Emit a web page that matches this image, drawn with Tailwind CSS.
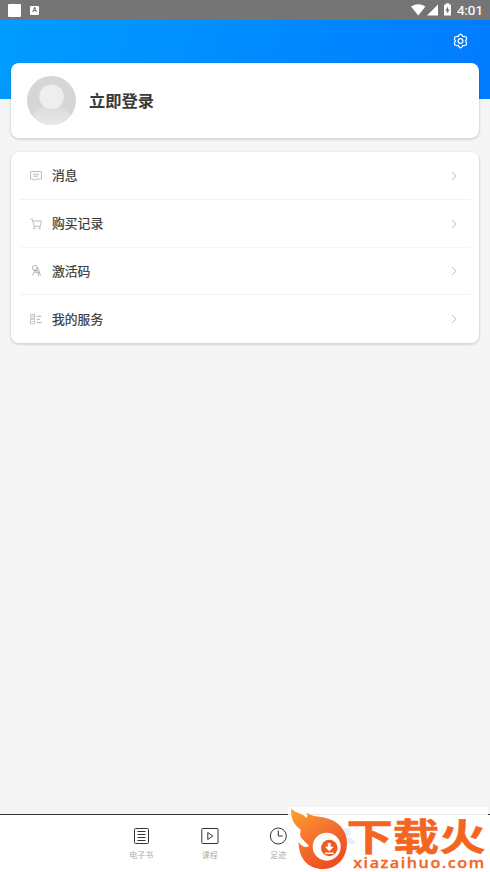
<!DOCTYPE html>
<html lang="zh-CN">
<head>
<meta charset="utf-8">
<title>我的</title>
<script src="https://cdn.jsdelivr.net/npm/@tailwindcss/browser@4"></script>
</head>
<body class="w-[490px] h-[872px] overflow-hidden bg-[#f5f5f5] font-['Noto_Sans_CJK_SC',sans-serif] text-[#3a3a3a]">
<div class="relative flex flex-col w-[490px] h-[872px]">
  <div class="absolute inset-x-0 top-5 h-[79px] bg-linear-[105deg,#009cff,#007cff]"></div>

  <header class="relative h-5 shrink-0 bg-[#757575] flex items-center pl-2 pr-[7px]">
    <div class="w-[13px] h-[13px] bg-white rounded-[1px]"></div>
    <div class="ml-[9px] w-[9px] h-[9px] bg-white rounded-[1px] text-[#757575] text-[7px] leading-[9px] font-bold text-center font-['Roboto',sans-serif]">A</div>
    <svg class="ml-auto" width="43" height="14" viewBox="0 0 43 14" fill="#fff">
      <path d="M0 3.5Q7.3-1 14.4 3.5L7.3 12.5z"/><path d="M27 1.5v11H16z"/>
      <path fill-rule="evenodd" d="M33 1.6h2V.3h3v1.3h2v11h-7zM37 3.5l-2.8 4.2h1.7v3L38.8 6.6h-1.8z"/>
    </svg>
    <span class="ml-[3px] font-['Roboto',sans-serif] text-[13.5px] leading-5 text-white [-webkit-text-stroke:.2px_#fff]">4:01</span>
  </header>

  <div class="relative h-[43px] shrink-0 flex justify-end pt-[13px] pr-[22px]">
    <svg width="15" height="16" viewBox="0 0 15 16" fill="none" stroke="#fff" stroke-width="1.2" stroke-linejoin="round"><path d="M5.6 2.4 7.5 1 9.4 2.4 9.8 3.7 11.1 3.3 13.4 4.3 13.5 6.6 12.4 8 13.5 9.4 13.4 11.7 11.1 12.7 9.8 12.3 9.4 13.6 7.5 15 5.6 13.6 5.2 12.3 3.9 12.7 1.6 11.7 1.5 9.4 2.6 8 1.5 6.6 1.6 4.3 3.9 3.3 5.2 3.7z"/><circle cx="7.5" cy="8" r="2.4"/></svg>
  </div>

  <section class="relative mx-[11px] h-[75px] shrink-0 bg-white rounded-lg shadow-[0_1px_2px_1px_rgba(0,0,0,0.12)] flex items-center pl-4">
    <svg width="49" height="49" viewBox="0 0 49 49">
      <defs><clipPath id="avatar"><circle cx="24.5" cy="24.5" r="24.5"/></clipPath><linearGradient id="body" x2="0" y2=".7"><stop stop-color="#dadada"/><stop offset="1" stop-color="#ebebeb"/></linearGradient></defs>
      <g clip-path="url(#avatar)"><path fill="#d6d6d6" d="M0 0h49v49H0z"/><ellipse cx="24.5" cy="45.5" rx="20" ry="16.5" fill="url(#body)"/><circle cx="24.6" cy="20.8" r="12.3" fill="#eee"/></g>
    </svg>
    <h1 class="-mt-px ml-[13px] text-[16.3px] leading-6 font-bold">立即登录</h1>
  </section>

  <nav class="relative mt-[14px] mx-[11px] h-[191px] shrink-0 bg-white rounded-lg shadow-[0_1px_2px_1px_rgba(0,0,0,0.12)] pl-[9px] pr-[9px] text-[12.8px] leading-5 font-normal [-webkit-text-stroke:.2px_#3a3a3a]">
    <a class="h-12 flex items-center border-b border-[#f3f3f3] pl-[10px] pr-[13px]">
      <svg width="12" height="12" viewBox="0 0 12 12" fill="none" stroke="#b5b5b5" stroke-width=".9"><path d="M.6 1.5h10.8v7.6H5.8L4.4 10.6 3.2 9.1H.6zM3 4.2h6M3 6.2h5"/></svg>
      <span class="ml-[10px] -mt-px">消息</span>
      <svg class="ml-auto" width="6" height="10" viewBox="0 0 6 10" fill="none" stroke="#bcbcbc"><path d="M.8.8 5.2 5 .8 9.2"/></svg>
    </a>
    <a class="h-12 flex items-center border-b border-[#f6f6f6] pl-[10px] pr-[13px]">
      <svg width="12" height="12" viewBox="0 0 12 12" fill="none" stroke="#b5b5b5" stroke-width=".9"><path d="M.5 1.3h2L4.1 8.3h6.2L11.2 3H3"/><circle cx="4.4" cy="10.3" r=".8"/><circle cx="9.6" cy="10.3" r=".8"/></svg>
      <span class="ml-[10px] -mt-px">购买记录</span>
      <svg class="ml-auto" width="6" height="10" viewBox="0 0 6 10" fill="none" stroke="#bcbcbc"><path d="M.8.8 5.2 5 .8 9.2"/></svg>
    </a>
    <a class="h-[47px] flex items-center border-b border-[#f3f3f3] pl-[10px] pr-[13px]">
      <svg width="12" height="12" viewBox="0 0 12 12" fill="none" stroke="#a5a5a5" stroke-width=".8"><circle cx="5" cy="3" r="2.6"/><path d="M5 4.6 7 2.6 9 4.6M3.8 5.5 5 6.4 2 10.8M4.8 7.6 6.8 4.6 8.6 8v3M8.6 5 10.6 10.6M5.5 7.5h2.8"/></svg>
      <span class="ml-[10px]">激活码</span>
      <svg class="ml-auto" width="6" height="10" viewBox="0 0 6 10" fill="none" stroke="#bcbcbc"><path d="M.8.8 5.2 5 .8 9.2"/></svg>
    </a>
    <a class="h-12 flex items-center pl-[10px] pr-[13px]">
      <svg width="12" height="12" viewBox="0 0 12 12" fill="none" stroke="#b5b5b5" stroke-width=".8"><path d="M.6 1.3h4v4h-4zM.6 6.2h4v4.6h-4zM1.5 3l1 1L5 .8M1.6 8.6h2"/><path stroke-width="1" d="M6.5 3.3h5M6.5 6.3h3.5M6.5 9.6h5.3"/></svg>
      <span class="ml-[10px] -mt-px">我的服务</span>
      <svg class="ml-auto" width="6" height="10" viewBox="0 0 6 10" fill="none" stroke="#bcbcbc"><path d="M.8.8 5.2 5 .8 9.2"/></svg>
    </a>
  </nav>

  <footer class="mt-auto h-[58px] shrink-0 bg-white border-t border-[#333] flex pl-[107px] text-[8px] leading-3 text-[#aaa]">
    <div class="w-[68.5px] flex flex-col items-center pt-3">
      <svg width="18" height="18" viewBox="0 0 18 18" fill="none" stroke="#333"><rect x="2.5" y="1.5" width="14" height="15" rx="1"/><path d="M5.500 4.5h8M5.500 7.5h8M5.500 10.5h8M5.500 13.5h8"/></svg>
      <span class="mt-[4px]">电子书</span>
    </div>
    <div class="w-[68.5px] flex flex-col items-center pt-3">
      <svg width="18" height="18" viewBox="0 0 18 18" fill="none" stroke="#333"><rect x=".8" y="1.5" width="16.2" height="15" rx=".7"/><path d="M6.8 5.5v7l5-3.5z"/></svg>
      <span class="mt-[4px]">课程</span>
    </div>
    <div class="w-[68.5px] flex flex-col items-center pt-3">
      <svg width="18" height="18" viewBox="0 0 18 18" fill="none" stroke="#333"><circle cx="9.3" cy="9" r="8"/><path d="M9.3 3.5V9h4.5"/></svg>
      <span class="mt-[4px]">足迹</span>
    </div>
    <div class="w-[68.5px] flex flex-col items-center pt-3">
      <svg width="18" height="18" viewBox="0 0 18 18" fill="#207cff"><circle cx="9" cy="5" r="4"/><path d="M1 17c0-9 16-9 16 0z"/></svg>
      <span class="mt-[4px] text-[#888]">我的</span>
    </div>
  </footer>

  <aside class="absolute left-[288px] top-[807px] w-[200px] h-[65px] bg-white/88">
    <svg class="absolute left-0 top-0" width="200" height="65" viewBox="0 0 200 65">
      <defs><linearGradient id="flame" x1="0" y1="0" x2=".6" y2="1"><stop stop-color="#ffa12b"/><stop offset=".5" stop-color="#f47430"/><stop offset="1" stop-color="#ee4e20"/></linearGradient></defs>
      <path fill="url(#flame)" d="M3 1.5C7 6 14 6 18.5 11Q20 9 19 5.5C24 10 31 9 38 11C50 14 59 23 59 36C59 52 48 62 35 62C21 62 11 53 10.500 35C14 40 18 41 21 39C18 35 14 33 12.500 29C11.500 26 13.500 24 12 22C5 17 3 11 3 1.500z"/>
      <circle cx="38.700" cy="39.700" r="14" fill="#fff"/>
      <circle cx="41.300" cy="41" r="8.300" fill="#f15b22"/>
      <path fill="#fff" d="M39.800 36h3v3.800h3l-4.500 4.400-4.500-4.400h3zM37 45.500h8.600v1.500H37z"/>
      <g fill="#f4651f">
        <text transform="scale(1 .81)" x="58.500" y="54" font-size="46" font-weight="700" stroke="#f4651f" stroke-width=".7" textLength="139" lengthAdjust="spacingAndGlyphs">下载火</text>
        <text transform="scale(1.12 1)" x="58.200" y="61" font-size="14.500" font-weight="600" font-family="Open Sans, sans-serif" stroke="#f4651f" stroke-width=".3" textLength="117" lengthAdjust="spacing">xiazaihuo.com</text>
      </g>
    </svg>
  </aside>
</div>
</body>
</html>
